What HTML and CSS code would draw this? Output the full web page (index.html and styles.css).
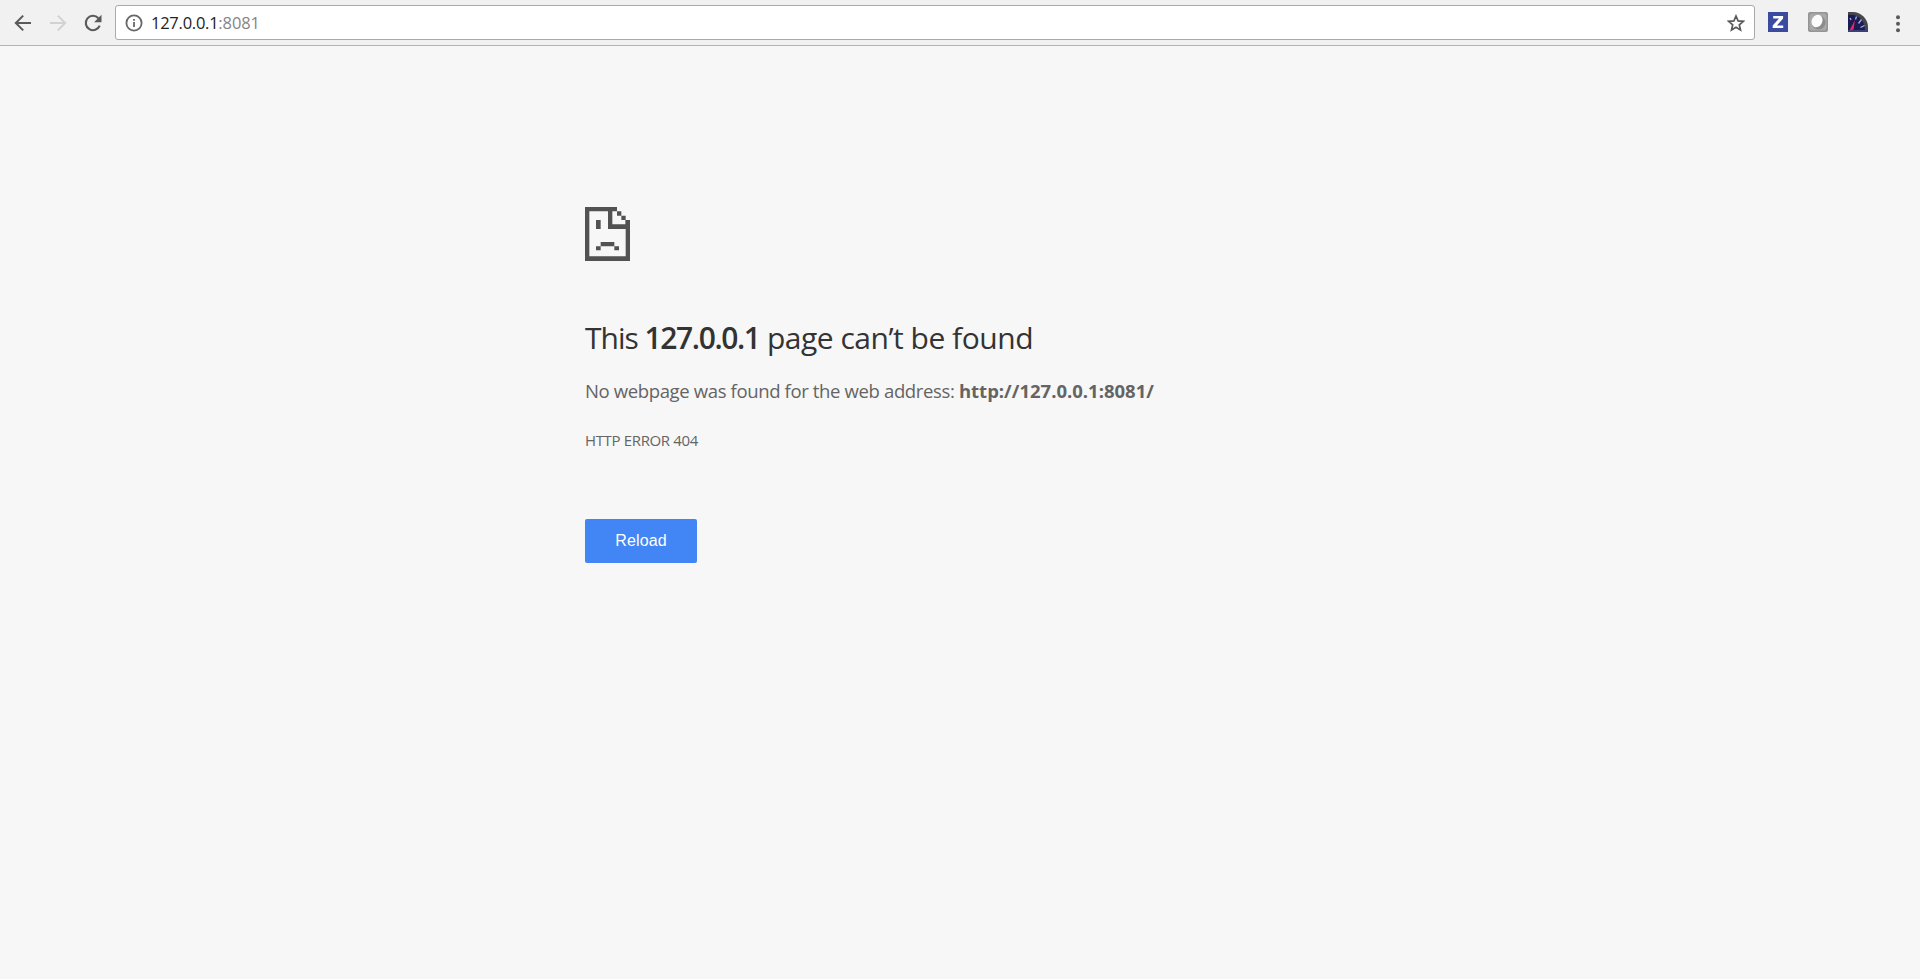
FILE: index.html
```html
<!DOCTYPE html>
<html lang="en">
<head>
<meta charset="utf-8">
<title>127.0.0.1</title>
<link rel="stylesheet" href="styles.css">
</head>
<body>
<header class="toolbar">
  <nav class="nav">
    <svg class="icon" width="20" height="20" viewBox="0 0 20 20"><path d="M18 10H3M10.2 2.6 2.8 10l7.4 7.4" fill="none" stroke="#5a5a5a" stroke-width="2"/></svg>
    <svg class="icon" width="20" height="20" viewBox="0 0 20 20"><path d="M2 10h15M9.8 2.6 17.2 10l-7.4 7.4" fill="none" stroke="#d2d2d2" stroke-width="2"/></svg>
    <svg class="icon" width="20" height="20" viewBox="0 0 20 20"><path d="M16.7 12.6A7.2 7.2 0 1 1 15.4 5.2" fill="none" stroke="#5a5a5a" stroke-width="2.1"/><path d="M18.5 1.8v7.4h-7.4z" fill="#5a5a5a"/></svg>
  </nav>
  <div class="omnibox">
    <svg class="info" width="18" height="18" viewBox="0 0 18 18"><circle cx="9" cy="9" r="7.6" fill="none" stroke="#666" stroke-width="1.8"/><path d="M8.1 8h1.8v5H8.1zM8.1 5h1.8v1.8H8.1z" fill="#666"/></svg>
    <span class="url"><span class="host">127.0.0.1</span><span class="port">:8081</span></span>
    <svg class="star" width="18" height="18" viewBox="0 0 18 18"><path d="m9 2 2.1 4.9 5.2.4-4 3.5 1.2 5.2L9 13.2 4.5 16l1.2-5.2-4-3.5 5.2-.4z" fill="none" stroke="#5a5a5a" stroke-width="1.7"/></svg>
  </div>
  <div class="extensions">
    <svg width="20" height="20" viewBox="0 0 20 20"><path d="M0 0h20v20H0z" fill="#3b4ba0"/><path d="M5.2 4h9.900v2.500l-6.200 7h6.300V16H4.700v-2.500l6.300-7H5.200z" fill="#fff"/></svg>
    <svg width="20" height="20" viewBox="0 0 20 20"><rect width="20" height="20" rx="2" fill="#959595"/><rect x="1.500" y="1.500" width="17" height="17" rx="3" fill="#aaa"/><ellipse cx="10.500" cy="10.500" rx="7" ry="7" fill="#8c8c8c"/><ellipse cx="9" cy="9" rx="5.300" ry="6.500" transform="rotate(28 9 9)" fill="#fcfcfc"/></svg>
    <svg width="20" height="20" viewBox="0 0 20 20"><path d="M0 0h5c8 0 15 7 15 15v5H0z" fill="#46464e"/><path d="M0 3c9-2 17 5 17 15H0z" fill="#1b1b55"/><path d="M0 18h20v2H0z" fill="#39417c"/><path d="m8.500 4.500-1 3m6 0-3 4m6 2-4 2M2 6l1 2" stroke="#aab0df" stroke-width="1.300"/><path d="m7 8-5.500 10.500 4-1z" fill="#f0285a"/></svg>
    <svg class="menu" width="4" height="18" viewBox="0 0 4 18"><g fill="#5a5a5a"><circle cx="2" cy="2.200" r="2"/><circle cx="2" cy="8.700" r="2"/><circle cx="2" cy="15.200" r="2"/></g></svg>
  </div>
</header>
<main class="error">
  <svg class="sad" width="45" height="54" viewBox="0 0 135 162"><path fill="#525252" d="M0 0h96v13H82v39h39V39h14v123H0zM13 13v135h109V66H69V13zM96 13h13v13H96zM109 26h13v13h-13zM33 39h14v27H33zM47 105h41v13H47zM33 118h14v12H33zM88 118h14v12H88z" fill-rule="evenodd"/></svg>
  <h1 class="title"><span class="title-start">This </span><strong class="title-host">127.0.0.1</strong><span class="title-end"> page can’t be found</span></h1>
  <p class="summary">No webpage was found for the web address: <strong class="address">http://127.0.0.1:8081/</strong></p>
  <p class="code">HTTP ERROR 404</p>
  <button class="reload" type="button">Reload</button>
</main>
</body>
</html>
```
FILE: styles.css
```css
* { box-sizing: border-box; }
body {
  margin: 0;
  min-height: 979px;
  background: #f7f7f7;
  font-family: "Open Sans", "Noto Sans", sans-serif;
  color: #646464;
}
svg { display: block; flex: none; }
.toolbar {
  display: flex;
  align-items: flex-start;
  height: 46px;
  padding-top: 5px;
  background: #f1f1f1;
  border-bottom: 1px solid #b4b4b4;
}
.nav {
  display: flex;
  gap: 15px;
  width: 115px;
  padding: 8px 0 0 13px;
}
.omnibox {
  display: flex;
  align-items: center;
  width: 1640px;
  height: 35px;
  padding: 0 9px;
  background: #fff;
  border: 1px solid #a9a9a9;
  border-radius: 3px;
}
.url {
  flex: 1;
  margin-left: 8px;
  font-size: 16.5px;
  line-height: 24px;
}
.host { color: #222; letter-spacing: -0.25px; }
.port { color: #858585; letter-spacing: -0.1px; }
.extensions {
  display: flex;
  gap: 20px;
  padding: 7px 0 0 13px;
}
.menu { margin: 3px 0 0 8px; }
.error {
  display: flex;
  flex-direction: column;
  align-items: flex-start;
  width: 750px;
  margin-left: 585px;
  padding-top: 161px;
  white-space: nowrap;
}
.title {
  margin: 57px 0 0;
  font-size: 30px;
  line-height: 40px;
  font-weight: 400;
  color: #333;
  white-space: pre;
}
.title-start { letter-spacing: -1px; }
.title-host { font-weight: 600; letter-spacing: -1.4px; }
.title-end { letter-spacing: -0.48px; }
.summary {
  margin: 19px 0 0;
  font-size: 18.5px;
  line-height: 28px;
  letter-spacing: -0.36px;
}
.address { letter-spacing: 0; }
.code {
  margin: 24px 0 0;
  font-size: 15px;
  line-height: 22px;
  letter-spacing: -0.35px;
}
.reload {
  width: 112px;
  height: 44px;
  margin: 68px 0 0;
  padding: 0;
  border: 0;
  border-radius: 2px;
  background: #4285f4;
  color: #fff;
  font: 16px "Liberation Sans", Arial, sans-serif;
  letter-spacing: 0.1px;
}
```
